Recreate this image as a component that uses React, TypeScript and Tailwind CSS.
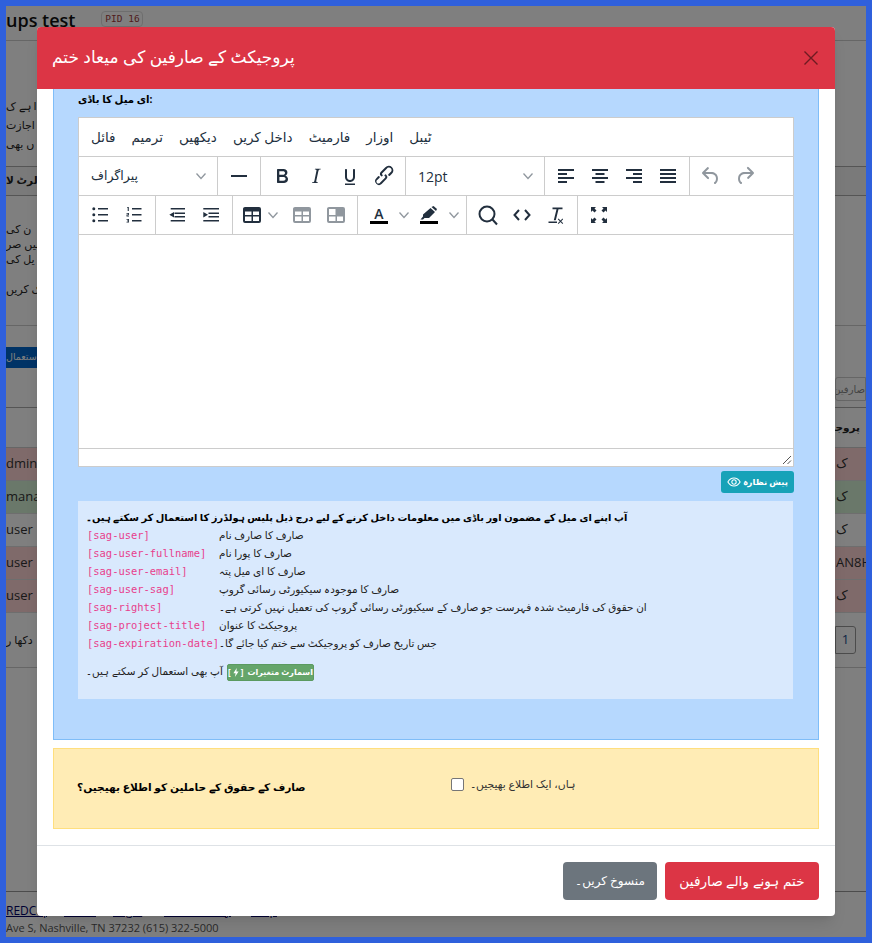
import React from "react";

const urdu = "font-['Open_Sans','DejaVu_Sans',sans-serif]";

// tinymce style icon paths, 24x24 box
const ICONS: Record<string, string> = {
  hr: "M4 11h16v2H4z",
  bold: "M7.8 19c-.3 0-.5 0-.6-.2l-.2-.5V5.7c0-.2 0-.4.2-.5l.6-.2h5c1.5 0 2.7.3 3.5 1 .7.6 1.1 1.4 1.1 2.5a3 3 0 0 1-.6 1.9c-.4.6-1 1-1.6 1.2.4.1.9.3 1.3.6s.8.7 1 1.2c.4.4.5 1 .5 1.6 0 1.3-.4 2.3-1.3 3-.8.7-2.1 1-3.8 1H7.8zm5-8.3c.6 0 1.2-.1 1.6-.5.4-.3.6-.7.6-1.3 0-1.1-.8-1.7-2.3-1.7H9.3v3.5h3.4zm.5 6c.7 0 1.3-.1 1.7-.4.4-.4.6-.9.6-1.5s-.2-1-.7-1.4c-.4-.3-1-.4-2-.4H9.4v3.8h4z",
  italic: "M16.7 4.7l-.1.9h-.3c-.6 0-1 0-1.4.3-.3.3-.4.6-.5 1.1l-2.1 9.8v.6c0 .5.4.8 1.4.8h.2l-.2.8H8l.2-.8h.2c1.1 0 1.8-.5 2-1.5l2-9.8.1-.5c0-.6-.4-.8-1.4-.8h-.3l.2-.9h5.8z",
  underline: "M16 5c.6 0 1 .4 1 1v7c0 2.8-2.2 5-5 5s-5-2.200-5-5V6c0-.6.4-1 1-1s1 .4 1 1v7c0 1.700 1.300 3 3 3s3-1.300 3-3V6c0-.6.4-1 1-1zM7 19.500h10v1.500H7z",
  link: "M6.2 12.3a1 1 0 0 1 1.4 1.4l-2.1 2.1a2 2 0 1 0 2.7 2.7l4.8-4.8a1 1 0 0 0 0-1.4 1 1 0 1 1 1.4-1.3 2.9 2.9 0 0 1 0 4L9.6 20a3.9 3.9 0 0 1-5.5-5.5l2-2.2zm11.6-.6a1 1 0 0 1-1.4-1.4l2-2a2.6 2.6 0 1 0-3.6-3.6l-4.5 4.5a1 1 0 0 0 0 1.4 1 1 0 1 1-1.4 1.4 3 3 0 0 1 0-4.2l4.5-4.5a4.6 4.6 0 1 1 6.5 6.5l-2 2z",
  left: "M4 5h16v2H4zM4 9h9v2H4zM4 13h16v2H4zM4 17h9v2H4z",
  center: "M4 5h16v2H4zM7.5 9h9v2h-9zM4 13h16v2H4zM7.5 17h9v2h-9z",
  right: "M4 5h16v2H4zM11 9h9v2h-9zM4 13h16v2H4zM11 17h9v2h-9z",
  justify: "M4 5h16v2H4zM4 9h16v2H4zM4 13h16v2H4zM4 17h16v2H4z",
  undo: "M6.4 8H12c3.7 0 6.2 2 6.8 5.1.6 2.7-.4 5.6-2.3 6.8a1 1 0 0 1-1-1.8c1.1-.6 1.8-2.7 1.4-4.6-.5-2.1-2.1-3.5-4.9-3.5H6.4l3.3 3.3a1 1 0 1 1-1.4 1.4l-5-5a1 1 0 0 1 0-1.4l5-5a1 1 0 0 1 1.4 1.4L6.4 8z",
  redo: "M17.6 10H12c-2.8 0-4.4 1.4-4.9 3.5-.4 2 .3 4 1.4 4.6a1 1 0 1 1-1 1.8c-2-1.2-2.9-4.1-2.3-6.8.6-3 3-5.1 6.8-5.1h5.6l-3.3-3.3a1 1 0 1 1 1.4-1.4l5 5a1 1 0 0 1 0 1.4l-5 5a1 1 0 0 1-1.4-1.4l3.3-3.3z",
  bullist: "M10 5h10v1.600H10zM10 11h10v1.600H10zM10 17h10v1.600H10zM4.300 5.800a1.500 1.500 0 1 0 3 0 1.500 1.500 0 1 0-3 0zM4.300 11.800a1.500 1.500 0 1 0 3 0 1.500 1.500 0 1 0-3 0zM4.300 17.800a1.500 1.500 0 1 0 3 0 1.500 1.500 0 1 0-3 0z",
  numlist: "M10 5h9.500v1.600H10zM10 11h9.500v1.600H10zM10 17h9.500v1.600H10zM5.500 4h1.300v4H5.700V5H5zM4.500 10h2.500v2.200H5.400v.6H7v.8H4.500v-2.100h1.700v-.7H4.500zM4.500 16h2.500v3.600H4.500v-.8h1.700v-.6H5v-.6h1.200v-.8H4.500z",
  outdent: "M5.700 5H20v1.600H5.700zM9.500 9.500H20v1.600H9.500zM9.500 13H20v1.600H9.500zM5.700 17H20v1.600H5.700zM9 9v5.500L4.300 11.800z",
  indent: "M4.300 5H20v1.600H4.300zM9.500 9.500H20v1.600H9.500zM9.500 13H20v1.600H9.500zM4.300 17H20v1.600H4.300zM4.300 9v5.500L9 11.800z",
  table: "M19 4a2 2 0 0 1 2 2v12a2 2 0 0 1-2 2H5a2 2 0 0 1-2-2V6c0-1.100.9-2 2-2h14zM5 8.500V12h6.500V8.500H5zm8 0V12h6V8.500h-6zM5 13.500V18h6.500v-4.500H5zm8 0V18h6v-4.500h-6z",
  cell: "M19 4a2 2 0 0 1 2 2v12a2 2 0 0 1-2 2H5a2 2 0 0 1-2-2V6c0-1.100.9-2 2-2h14zM5 6v6h6.500V6H5zm0 7.500V18h6.500v-4.500H5zm8 0V18h6v-4.500h-6z",
  clear: "M8.500 4.500h10v1.800h-4l-2.700 11H9.800l2.700-11h-4zM4.500 18.500h8.500v1.500H4.500zM14.500 15.500l2 2 2-2 .7.700-2 2 2 2-.7.700-2-2-2 2-.7-.700 2-2-2-2z",
  fullscreen: "M4 4h5L7.500 5.500l2 2-2 2-2-2L4 9zM20 4v5l-1.500-1.500-2 2-2-2 2-2L15 4zM4 20v-5l1.500 1.500 2-2 2 2-2 2L9 20zM20 20h-5l1.500-1.500-2-2 2-2 2 2L20 15z",
};

function Icon({ name, muted }: { name: string; muted?: boolean }) {
  return (
    <svg viewBox="0 0 24 24" className={`w-6 h-6 ${muted ? "fill-[#222f3e]/50" : "fill-[#222f3e]"}`}>
      <path fillRule="evenodd" d={ICONS[name]} />
    </svg>
  );
}

function Btn({ name, muted }: { name: string; muted?: boolean }) {
  return (
    <div className="w-[34px] h-[38px] flex items-center justify-center shrink-0">
      <Icon name={name} muted={muted} />
    </div>
  );
}

function Chevron({ className = "" }: { className?: string }) {
  return (
    <svg viewBox="0 0 10 10" className={`w-[10px] h-[10px] fill-none stroke-[#222f3e]/50 stroke-[1.3] shrink-0 ${className}`}>
      <path d="M0.5 2.500 5 7.500 9.500 2.500" />
    </svg>
  );
}

function Group({ children, last }: { children: React.ReactNode; last?: boolean }) {
  return (
    <div className={`flex items-center px-[4px] h-full shrink-0 ${last ? "" : "border-r border-[#cccccc]"}`}>{children}</div>
  );
}

function Editor() {
  const menu = ["فائل", "ترمیم", "دیکھیں", "داخل کریں", "فارمیٹ", "اوزار", "ٹیبل"];
  return (
    <div className="border border-[#cccccc] bg-white w-[716px] h-[350px] flex flex-col text-[#222f3e]">
      <div className={`h-[39px] flex items-center gap-[16px] pl-[12px] border-b border-[#cccccc] text-[13.5px] ${urdu}`}>
        {menu.map((m) => (
          <span key={m}>{m}</span>
        ))}
      </div>
      <div className="h-[39px] flex border-b border-[#cccccc]">
        <div className="w-[139px] flex items-center justify-between pl-[12px] pr-[11px] border-r border-[#cccccc] shrink-0">
          <span className={`text-[12.5px] ${urdu}`}>پیراگراف</span>
          <Chevron />
        </div>
        <Group><Btn name="hr" /></Group>
        <Group>
          <Btn name="bold" />
          <Btn name="italic" />
          <Btn name="underline" />
          <Btn name="link" />
        </Group>
        <div className="w-[139px] flex items-center justify-between pl-[12px] pr-[11px] border-r border-[#cccccc] shrink-0">
          <span className="text-[14px] font-['Open_Sans',sans-serif]">12pt</span>
          <Chevron />
        </div>
        <Group>
          <Btn name="left" />
          <Btn name="center" />
          <Btn name="right" />
          <Btn name="justify" />
        </Group>
        <Group last>
          <Btn name="undo" muted />
          <Btn name="redo" muted />
        </Group>
      </div>
      <div className="h-[39px] flex border-b border-[#cccccc]">
        <Group>
          <Btn name="bullist" />
          <Btn name="numlist" />
        </Group>
        <Group>
          <Btn name="outdent" />
          <Btn name="indent" />
        </Group>
        <Group>
          <div className="w-[48px] h-[38px] flex items-center pl-[3px] gap-[4px] shrink-0">
            <Icon name="table" />
            <Chevron />
          </div>
          <Btn name="table" muted />
          <Btn name="cell" muted />
        </Group>
        <Group>
          <div className="w-[50px] h-[38px] flex items-center pl-[5px] gap-[8px] shrink-0">
            <div className="w-6 flex flex-col items-center">
              <span className="text-[14px] leading-[15px] font-semibold font-['Open_Sans',sans-serif]">A</span>
              <div className="w-[18px] h-[3px] bg-black" />
            </div>
            <Chevron />
          </div>
          <div className="w-[50px] h-[38px] flex items-center pl-[5px] gap-[8px] shrink-0">
            <div className="w-6 flex flex-col items-center">
              <svg viewBox="0 0 18 15" className="w-[18px] h-[15px] fill-[#222f3e]">
                <path d="M10.500 2 15 6 9 12H4.500L3 13.500H0.500L3 10.500V8.500z" />
                <path d="M11.500 1 13.500 0l3.500 3-1 2z" />
              </svg>
              <div className="w-[18px] h-[3px] bg-black" />
            </div>
            <Chevron />
          </div>
        </Group>
        <Group>
          <div className="w-[34px] h-[38px] flex items-center justify-center shrink-0">
            <svg viewBox="0 0 24 24" className="w-6 h-6 fill-none stroke-[#222f3e] stroke-2">
              <circle cx="11" cy="11" r="7.500" />
              <path d="M16.500 16.500 21 21.500" />
            </svg>
          </div>
          <div className="w-[34px] h-[38px] flex items-center justify-center shrink-0">
            <svg viewBox="0 0 24 24" className="w-6 h-6 fill-none stroke-[#222f3e] stroke-2">
              <path d="M9 7 4.500 12 9 17M15 7l4.500 5-4.500 5" />
            </svg>
          </div>
          <Btn name="clear" />
        </Group>
        <Group last><Btn name="fullscreen" /></Group>
      </div>
      <div className="flex-1" />
      <div className="h-[18px] border-t border-[#cccccc] flex justify-end items-end">
        <svg viewBox="0 0 10 10" className="w-[10px] h-[10px] stroke-[#555] mr-[1px] mb-[1px]">
          <path d="M1 9 9 1M5.500 9 9 5.500" />
        </svg>
      </div>
    </div>
  );
}

const placeholders = [
  ["[sag-user]", "صارف کا صارف نام"],
  ["[sag-user-fullname]", "صارف کا پورا نام"],
  ["[sag-user-email]", "صارف کا ای میل پتہ"],
  ["[sag-user-sag]", "صارف کا موجودہ سیکیورٹی رسائی گروپ"],
  ["[sag-rights]", "ان حقوق کی فارمیٹ شدہ فہرست جو صارف کے سیکیورٹی رسائی گروپ کی تعمیل نہیں کرتی ہے۔"],
  ["[sag-project-title]", "پروجیکٹ کا عنوان"],
  ["[sag-expiration-date]", "جس تاریخ صارف کو پروجیکٹ سے ختم کیا جائے گا۔"],
];

function Modal() {
  return (
    <div className="absolute left-[37px] top-[27px] w-[798px] h-[889px] bg-white rounded-[4px] overflow-hidden flex flex-col shadow-lg">
      <div className="h-[62px] bg-[#dc3545] flex items-center justify-between pl-[15px] pr-[16px] shrink-0">
        <h1 className={`text-[17px] text-white -mt-[3px] ${urdu}`}>پروجیکٹ کے صارفین کی میعاد ختم</h1>
        <svg viewBox="0 0 16 16" className="w-[16px] h-[16px] stroke-[#6e1b22] fill-none stroke-[1.4]">
          <path d="M1.500 1.500 14.500 14.500M14.500 1.500 1.500 14.500" />
        </svg>
      </div>
      <div className="flex-1 px-[16px] flex flex-col overflow-hidden">
        <div className="h-[651px] bg-[#b6d8fe] border-x border-b border-[#7fbdf8] pl-[24px] pr-[24px] shrink-0">
          <div className={`h-[28px] pt-[3px] text-[10.2px] font-bold text-black ${urdu}`}>ای میل کا باڈی:</div>
          <Editor />
          <div className="flex justify-end mt-[4px]">
            <div className={`h-[22px] px-[6px] rounded-[3px] bg-[#17a2b8] text-white text-[8.5px] font-bold flex items-center gap-[2px] ${urdu}`}>
              <svg viewBox="0 0 16 16" className="w-[14px] h-[14px] fill-none stroke-white stroke-[1.2]">
                <path d="M1 8s2.600-4.500 7-4.500S15 8 15 8s-2.600 4.500-7 4.500S1 8 1 8z" />
                <circle cx="8" cy="8" r="2.500" />
              </svg>
              <span>پیش نظارہ</span>
            </div>
          </div>
          <div className="mt-[8px] h-[198px] bg-[#d9e9fd] w-[715px] pl-[8px] pt-[7px] text-[10.45px] text-[#222]">
            <div className={`h-[19px] text-[9.85px] font-bold text-black leading-[18px] ${urdu}`}>
              آپ اپنے ای میل کے مضمون اور باڈی میں معلومات داخل کرنے کے لیے درج ذیل پلیس ہولڈرز کا استعمال کر سکتے ہیں۔
            </div>
            {placeholders.map(([code, text]) => (
              <div key={code} className="h-[18px] flex items-center">
                <code className="ml-px w-[132px] shrink-0 whitespace-nowrap text-[10.45px] text-[#e83e8c] font-['DejaVu_Sans_Mono',monospace]">{code}</code>
                <span className={urdu}>{text}</span>
              </div>
            ))}
            <div className={`mt-[10px] h-[18px] flex items-center ${urdu}`}>
              <span className="w-[141px] shrink-0 whitespace-nowrap">آپ بھی استعمال کر سکتے ہیں۔</span>
              <span className="h-[17px] w-[87px] rounded-[2px] bg-[#65a56a] border border-[#5b9a60] text-white text-[8px] font-bold flex items-center justify-center gap-[2px] whitespace-nowrap">
                <span>[</span>
                <svg viewBox="0 0 8 12" className="w-[6px] h-[9px] fill-white">
                  <path d="M5 0 0.500 7H3.500L2.500 12 7.500 4.500H4.500z" />
                </svg>
                <span>]</span>
                <span className="ml-[2px]">اسمارٹ متغیرات</span>
              </span>
            </div>
          </div>
        </div>
        <div className="mt-[8px] h-[81px] bg-[#ffecb5] border border-[#ffdf7e] flex items-center pl-[23px] shrink-0">
          <div className={`w-[374px] text-[10.6px] font-bold text-black shrink-0 -mt-[2px] ${urdu}`}>صارف کے حقوق کے حاملین کو اطلاع بھیجیں؟</div>
          <div className="flex items-center gap-[6px] -mt-[8px]">
            <div className="w-[13px] h-[13px] rounded-[2px] bg-white border border-[#767676]" />
            <span className={`text-[10.8px] text-[#333] ${urdu}`}>ہاں، ایک اطلاع بھیجیں۔</span>
          </div>
        </div>
      </div>
      <div className="h-[71px] border-t border-[#dee2e6] flex justify-end items-start gap-[8px] pt-[16px] pr-[16px] shrink-0">
        <div className={`w-[94px] h-[38px] rounded-[4px] bg-[#6c757d] text-white text-[12px] flex items-center justify-center ${urdu}`}>منسوخ کریں۔</div>
        <div className={`w-[154px] h-[38px] rounded-[4px] bg-[#dc3545] text-white text-[13.7px] flex items-center justify-center ${urdu}`}>ختم ہونے والے صارفین</div>
      </div>
    </div>
  );
}

function Row({ left, right, bg = "" }: { left: string; right: string; bg?: string }) {
  return (
    <div className={`h-[33px] flex justify-between items-center border-b border-[#dddddd] text-[13px] text-[#333] ${bg}`}>
      <span>{left}</span>
      <span className="w-[30px] overflow-hidden whitespace-nowrap">{right}</span>
    </div>
  );
}

function Page() {
  return (
    <div className={`w-[860px] h-[931px] bg-white overflow-hidden flex flex-col text-[#222] ${urdu}`}>
      <div className="h-[35px] flex items-center gap-[26px] border-b border-[#cccccc] shrink-0">
        <span className="text-[18px] font-semibold text-[#111] -mt-[6px]">ups test</span>
        <span className="-mt-[8px] h-[16px] w-[42px] rounded-[4px] border border-[#dddddd] text-[#a03a3a] text-[9.5px] flex items-center justify-center font-['DejaVu_Sans_Mono',monospace]">PID 16</span>
      </div>
      <div className="h-[126px] border-b border-[#aaaaaa] pt-[55px] text-[11px] leading-[19px] shrink-0">
        <div className="w-[31px] overflow-hidden whitespace-nowrap">ا ہے ک</div>
        <div className="w-[31px] overflow-hidden whitespace-nowrap">اجازت</div>
        <div className="w-[31px] overflow-hidden whitespace-nowrap">ں بھی</div>
      </div>
      <div className="h-[29px] bg-[#f5f5f5] border-b border-[#aaaaaa] flex items-center text-[10.5px] font-bold shrink-0">الرٹ لا</div>
      <div className="h-[130px] border-b border-[#cccccc] pt-[25px] text-[11px] leading-[15px] shrink-0">
        <div>ن کی</div>
        <div>میں صر</div>
        <div>یل کی</div>
        <div className="mt-[15px]">ک کریں</div>
      </div>
      <div className="h-[82px] border-b border-[#aaaaaa] pt-[21px] flex justify-between shrink-0">
        <div className="w-[31px] h-[21px] bg-[#0066cc] text-white text-[9.5px] flex items-center overflow-hidden whitespace-nowrap">استعمال</div>
        <div className="h-[24px] w-[31px] mt-[30px] rounded-l-[3px] border border-[#cccccc] text-[#888] text-[10px] flex items-center justify-end overflow-hidden whitespace-nowrap">صارفین</div>
      </div>
      <div className="h-[40px] flex justify-end items-center border-b border-[#cccccc] text-[10.5px] font-bold pr-[6px] shrink-0">
        <span dir="rtl" className="w-[28px] overflow-hidden whitespace-nowrap">پروجیکٹ</span>
      </div>
      <Row left="dmin" right="ک" bg="bg-[#ffd5d5]" />
      <Row left="mana" right="ک" bg="bg-[#d5f0d5]" />
      <Row left="user" right="ک" />
      <Row left=" user" right="AN8HF" bg="bg-[#ffd5d5]" />
      <Row left="user" right="ک" bg="bg-[#ffd5d5]" />
      <div className="h-[55px] flex justify-between items-center border-b border-[#cccccc] text-[11px] pr-[10px] shrink-0">
        <span>دکھا ر</span>
        <span className="w-[21px] h-[28px] rounded-r-[3px] border border-[#999] text-[#1a4a8a] text-[13px] flex items-center justify-center">1</span>
      </div>
      <div className="h-[224px] border-b border-[#999] shrink-0" />
      <div className="pt-[9px] text-[12px]">
        <div className="h-[20px] flex items-center gap-[17px] whitespace-nowrap text-[#000066]">
          <span className="w-[41px] overflow-hidden underline">REDCap</span>
          <span className="w-[32px] overflow-hidden underline">Privacy</span>
          <span className="w-[34px] overflow-hidden underline">Legal</span>
          <span className="w-[70px] overflow-hidden underline">Accessibility</span>
          <span className="w-[29px] overflow-hidden underline">Help</span>
        </div>
        <div className="text-[11px] text-[#555] leading-[16px] -mt-[1px] whitespace-nowrap">Ave S, Nashville, TN 37232 (615) 322-5000</div>
      </div>
    </div>
  );
}

export default function App() {
  return (
    <div className="relative w-[872px] h-[943px] overflow-hidden bg-[#2f60dc] p-[6px]">
      <Page />
      <div className="absolute left-[6px] top-[6px] w-[860px] h-[931px] bg-black/50" />
      <Modal />
    </div>
  );
}
